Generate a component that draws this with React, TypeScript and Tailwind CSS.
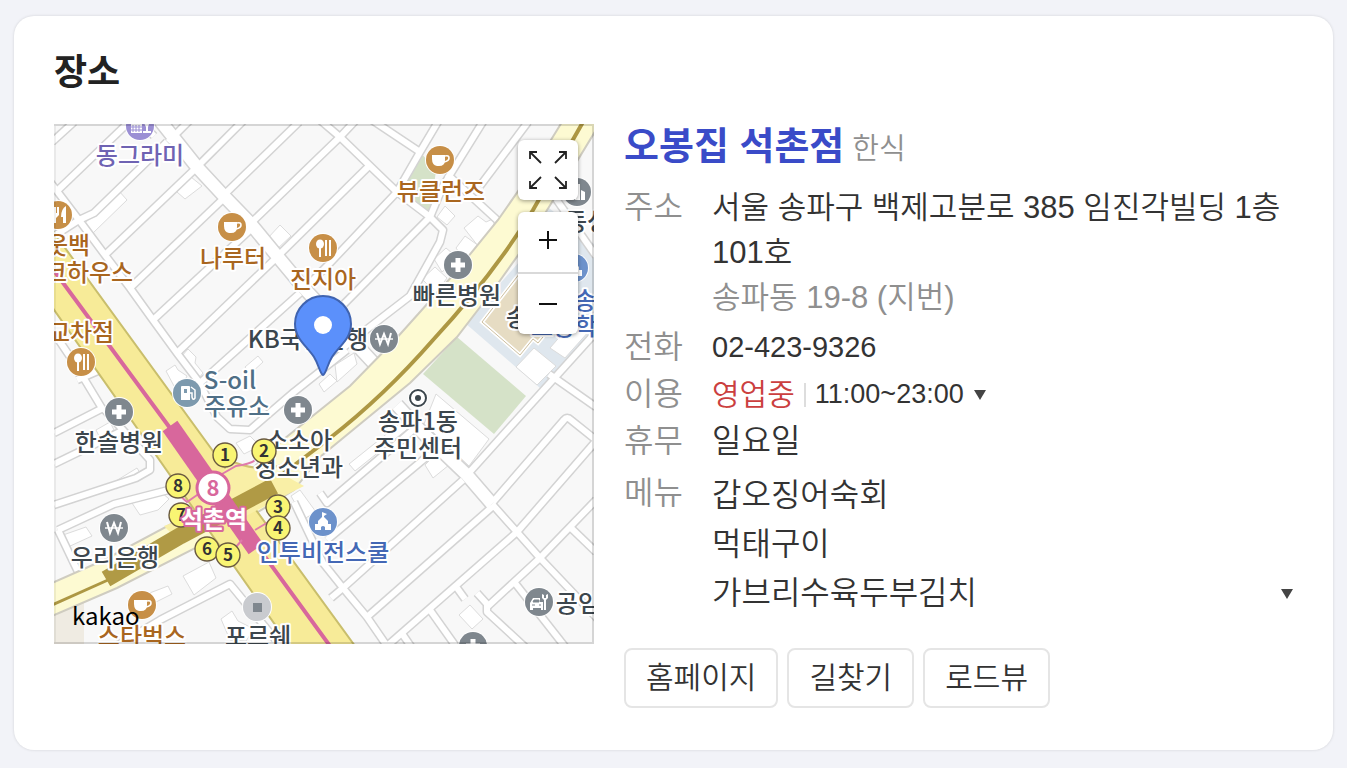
import React, { useState } from 'react';
import { clsx } from 'clsx';

type Kind =
  | 'cup'
  | 'spoon'
  | 'fork'
  | 'hospital'
  | 'won'
  | 'gas'
  | 'school'
  | 'office'
  | 'hotel'
  | 'shop'
  | 'car';

interface Poi {
  kind: Kind;
  x: number;
  y: number;
}

interface Label {
  text: string;
  x: number;
  y: number;
  tone: string;
}

const markerColors: Record<Kind, string> = {
  cup: '#c78f47',
  spoon: '#c78f47',
  fork: '#c78f47',
  hospital: '#7f878e',
  won: '#7f878e',
  gas: '#7d9aae',
  school: '#6d92cb',
  office: '#7f878e',
  hotel: '#9b8fd4',
  shop: '#c9cbcf',
  car: '#7f878e',
};

const BROWN = '#a9661f';
const DARK = '#3c464d';
const BLUE = '#4468b5';

const pois: Poi[] = [
  { kind: 'hotel', x: 86, y: 2 },
  { kind: 'cup', x: 386, y: 36 },
  { kind: 'cup', x: 178, y: 103 },
  { kind: 'fork', x: 4, y: 91 },
  { kind: 'spoon', x: 269, y: 124 },
  { kind: 'spoon', x: 27, y: 238 },
  { kind: 'hospital', x: 404, y: 141 },
  { kind: 'hospital', x: 65, y: 288 },
  { kind: 'hospital', x: 244, y: 286 },
  { kind: 'hospital', x: 419, y: 522 },
  { kind: 'won', x: 330, y: 215 },
  { kind: 'won', x: 60, y: 404 },
  { kind: 'gas', x: 133, y: 269 },
  { kind: 'school', x: 269, y: 398 },
  { kind: 'school', x: 520, y: 144 },
  { kind: 'office', x: 523, y: 68 },
  { kind: 'shop', x: 203, y: 483 },
  { kind: 'car', x: 485, y: 478 },
  { kind: 'cup', x: 88, y: 481 },
];

const labels: Label[] = [
  { text: '동그라미', x: 86, y: 40, tone: '#6f63b3' },
  { text: '뷰클런즈', x: 387, y: 76, tone: BROWN },
  { text: '나루터', x: 179, y: 143, tone: BROWN },
  { text: '진지아', x: 269, y: 164, tone: BROWN },
  { text: '아웃백', x: 3, y: 130, tone: BROWN },
  { text: '이크하우스', x: 24, y: 157, tone: BROWN },
  { text: '교차점', x: 27, y: 217, tone: BROWN },
  { text: '빠른병원', x: 403, y: 180, tone: DARK },
  { text: 'KB국민은행', x: 254, y: 224, tone: DARK },
  { text: 'S-oil', x: 176, y: 265, tone: '#4f6f86' },
  { text: '주유소', x: 183, y: 291, tone: '#4f6f86' },
  { text: '한솔병원', x: 65, y: 327, tone: DARK },
  { text: '소소아', x: 245, y: 325, tone: DARK },
  { text: '청소년과', x: 245, y: 352, tone: DARK },
  { text: '송파1동', x: 364, y: 306, tone: DARK },
  { text: '주민센터', x: 364, y: 333, tone: DARK },
  { text: '우리은행', x: 61, y: 442, tone: DARK },
  { text: '인투비전스쿨', x: 269, y: 437, tone: BLUE },
  { text: '스타벅스', x: 88, y: 521, tone: BROWN },
  { text: '포르쉐', x: 204, y: 521, tone: DARK },
  { text: '공임나라', x: 546, y: 488, tone: DARK },
  { text: '송파', x: 474, y: 202, tone: DARK },
  { text: '동성', x: 533, y: 106, tone: DARK },
  { text: '송파', x: 542, y: 185, tone: BLUE },
  { text: '초등학', x: 510, y: 211, tone: BLUE },
];

const exits = [
  { no: 1, x: 171, y: 331 },
  { no: 2, x: 210, y: 327 },
  { no: 7, x: 127, y: 391 },
  { no: 8, x: 124, y: 362 },
  { no: 3, x: 224, y: 383 },
  { no: 4, x: 224, y: 404 },
  { no: 6, x: 153, y: 425 },
  { no: 5, x: 174, y: 431 },
];

const streets = [
  'M-2 18L20-2',
  'M3 67L75-2',
  'M-4 58L3 67L25 96L51 131L76 164L99 196L123 229L145 258L163 293L176 305L196 306L240 268L293 226',
  'M0 112L25 96L40 89L113 18',
  'M85-4L100 12',
  'M51 131L140 46',
  'M76 164L168 76',
  'M99 196L196 106',
  'M123 229L220 136',
  'M146 259L246 169',
  'M146 40L190-4',
  'M114 18L136-4',
  'M173 68L245-2',
  'M198 98L286 13L302-4',
  'M226 130L316 41',
  'M250 165L276 139L343 68',
  'M266-4L286 13L314 40L343 68L376 93',
  'M312-8L366 28',
  'M343 68L366 28L385-4',
  'M376 93L389 62L430-4',
  'M376 93L389 106L386 118L356 172L286 226',
  'M290 180L376 93',
  'M393 50L443 96',
  'M426 62L474-2',
  'M0 209L23 243L49 286',
  'M23 256L46 246L60 262',
  'M0 309L49 284',
  'M49 284L96 336L96 346L82 354L0 381',
  'M70 306L0 340',
  'M4 406L60 380L130 362',
  'M4 406L26 452',
  'M62 522L106 496L176 460L230 526',
  'M266 369L273 379L366 300',
  'M240 378L269 439L289 464L313 493L333 522',
  'M273 416L376 330',
  'M277 474L289 464L409 356',
  'M313 493L438 383',
  'M333 522L463 408',
  'M439 378L510 296Q513 292 517 296L542 316',
  'M463 408L542 317',
  'M542 208L413 351',
  'M495 250L542 283',
  'M433 483L486 434L542 376',
  'M516 403L542 428',
  'M423 469L433 480L433 488L472 524',
  'M461 459L512 524',
  'M376 486L403 524',
  'M403 464L411 475',
  'M347 508L358 524',
  'M500 72L542 132',
];

const avenues = [
  'M104-6L143 43L169 71L196 99L224 133L249 163L326 246',
  'M343 281L366 306L413 351L438 380',
];

const buildings = [
  'M31 99L65 67L73 76L39 109Z',
  'M123 68L137 53L148 62L131 75Z',
  'M213 115L226 101L237 112L221 127Z',
  'M127 233L134 225L142 233L141 239L149 249L144 255Z',
  'M112 247L121 241L124 246L133 252L128 262L120 262Z',
  'M191 243L204 232L209 238L196 250Z',
  'M383 93L391 82L401 92L393 101Z',
  'M410 104L424 92L432 98L441 94L439 105L424 122Z',
  'M402 124L411 112L425 122L412 138Z',
  'M380 135L392 124L404 134L388 148Z',
  'M368 155L381 143L393 154L382 169Z',
  'M281 241L300 229L303 240L283 258Z',
  'M265 260L276 250L283 257L270 268Z',
  'M382 270L435 315L415 342L370 300Z',
  'M295 340L355 292L361 299L301 347Z',
  'M371 341L384 328L395 341L379 354Z',
  'M462 243L480 224L502 242L483 261Z',
  'M496 224L522 194L536 206L511 234Z',
  'M405 491L416 481L429 495L418 505Z',
  'M57 360L83 344L86 349L62 365Z',
  'M78 379L106 367L115 375L104 386L86 391Z',
  'M9 411L32 403L38 412L14 423Z',
  'M129 452L155 438L162 454L140 471Z',
  'M80 475L114 462L118 470L84 487Z',
  'M167 495L178 487L184 497L200 505L192 517L176 516Z',
  'M182 319L196 312L206 322L190 330Z',
  'M42 306L56 298L60 306L46 314Z',
  'M237 372L246 366L262 388L250 395Z',
];

function MarkerGlyph({ kind }: { kind: Kind }) {
  switch (kind) {
    case 'cup':
      return (
        <g>
          <path d="M-8-5H5V0Q5 6-1 6H-3Q-8 5-8-1Z" fill="#fff" />
          <path d="M5-4Q9-5 9-2T4 2" fill="none" stroke="#fff" strokeWidth="1.6" />
        </g>
      );
    case 'spoon':
      return (
        <g fill="#fff">
          <ellipse cx="-3" cy="-4" rx="4" ry="4.5" />
          <path d="M-4 0H-2V9H-4ZM2-8H4V8H2ZM6-8H8V8H6Z" />
        </g>
      );
    case 'fork':
      return (
        <g fill="#fff">
          <path d="M-7-8H-5V-2H-4V-8H-2V-2H-1V-8H1V0L-2 3V8H-4V3L-7 0Z" />
          <path d="M8-9V8H5V2H3Q3-6 8-9Z" />
        </g>
      );
    case 'hospital':
      return <path d="M-2.5-7H2.5V-2.5H7V2.5H2.5V7H-2.5V2.5H-7V-2.5H-2.5Z" fill="#fff" />;
    case 'won':
      return (
        <g fill="none" stroke="#fff" strokeWidth="2">
          <path d="M-7-6L-4 5L0-5L4 5L7-6" />
          <path d="M-9 0H9" strokeWidth="1.4" />
        </g>
      );
    case 'gas':
      return (
        <g>
          <path d="M-6-6Q-6-7-5-7H2Q3-7 3-6V7H-6Z" fill="#fff" />
          <path d="M-3-4H0V0H-3Z" fill="#7d9aae" />
          <path d="M4-6L8-3V5Q6 8 5 4V0H3" fill="none" stroke="#fff" strokeWidth="1.5" />
        </g>
      );
    case 'school':
      return (
        <path
          d="M-1-10L4-8L1-6V-5L5-1V2H8V8H2V5Q0 3-2 5V8H-8V2H-5V-1L-1-5Z"
          fill="#fff"
        />
      );
    case 'office':
      return <path d="M-8 8V-3H-3V8ZM-2 8V-8H3V8ZM4 8V-2L8 0V8Z" fill="#fff" />;
    case 'hotel':
      return (
        <g fill="#fff">
          <path d="M-9-4H2V7H-9Z" />
          <path d="M3-5H10L8 1V5H11V7H3V5H6V1Z" />
          <path d="M-7-1V6M-4-1V6M-1-1V6M-9 1H2M-9 4H2" stroke="#9b8fd4" strokeWidth="1" />
        </g>
      );
    case 'shop':
      return <path d="M-4-4H5V5H-4Z" fill="#7f878e" />;
    case 'car':
      return (
        <g>
          <path d="M-9 1L-6-4H1V0H4V8H2V6H-6V8H-9Z" fill="#fff" />
          <path d="M-6 0L-5-2H0V0ZM-7 3H-4M0 3H2" fill="#7f878e" stroke="#7f878e" />
          <path d="M3-8V-4L5-2V8H7V-2L9-4V-8L7-7V-4H5V-7Z" fill="#fff" />
        </g>
      );
  }
}

function MapDrawing() {
  return (
    <svg
      viewBox="0 0 540 520"
      className="block h-auto w-full bg-[#f8f8f8]"
      role="img"
      aria-label="오봉집 석촌점 주변 지도"
    >
      {/* Blocks */}
      <path d="M366 28L382 46L376 93L343 68Z" fill="#d5e2c8" />
      <path d="M403 213L472 272L440 310L369 250Z" fill="#d5e2c8" />
      <path d="M466 137L411 199L486 264L540 208V120L490 80Z" fill="#dfe7ee" />
      <path d="M0 482L30 468V520H0Z" fill="#efebe2" />
      <path
        d="M466 149L428 198L466 231L479 215L484 219L520 175L486 145Z"
        fill="#e6dcc3"
        stroke="#fff"
        strokeWidth="4"
      />
      <path
        d="M466 149L428 198L466 231L479 215L484 219L520 175L486 145Z"
        fill="none"
        stroke="#cdbf9f"
        strokeWidth="1"
      />
      <g fill="#fff" stroke="#dcdcdc" strokeWidth="1">
        {buildings.map((d) => (
          <path key={d} d={d} />
        ))}
      </g>

      {/* Streets: grey casing first, white surface on top */}
      <g fill="none" strokeLinejoin="round">
        <g stroke="#d3d3d3" strokeWidth="9">
          {streets.map((d) => (
            <path key={d} d={d} />
          ))}
        </g>
        <g stroke="#d3d3d3" strokeWidth="15">
          {avenues.map((d) => (
            <path key={d} d={d} />
          ))}
        </g>
        <path d="M438 380L463 408L486 434L523 473L562 514" stroke="#d3d3d3" strokeWidth="9" />
        <g stroke="#fff" strokeWidth="6">
          {streets.map((d) => (
            <path key={d} d={d} />
          ))}
          <path d="M438 380L463 408L486 434L523 473L562 514" />
        </g>
        <g stroke="#fff" strokeWidth="12">
          {avenues.map((d) => (
            <path key={d} d={d} />
          ))}
        </g>
      </g>

      {/* Main roads */}
      <path
        d="M508-2L476 50L444 96L400 150L340 217L296 262L230 315L180 362L140 388L50 436L-2 459V492L63 464L163 413L240 366L266 333L356 259L403 213L440 165L472 120L508 62L542 6V-2Z"
        fill="#fdfad2"
        stroke="#cfccc0"
        strokeWidth="2"
      />
      <path d="M-2 106L301 522H236L-2 183Z" fill="#f7eb98" stroke="#c9be6c" strokeWidth="2" />
      <path
        d="M176 338L200 344L228 350L250 362L236 369L192 392L150 405L120 412L110 402L140 390Z"
        fill="#f9efa6"
      />
      <path
        d="M529-2L479 86Q440 150 379 216Q330 272 276 314L226 352"
        fill="none"
        stroke="#ad9743"
        strokeWidth="4"
      />
      <path d="M-2 481L54 456" fill="none" stroke="#ad9743" strokeWidth="3" />
      <path d="M220 362L126 412L52 455" fill="none" stroke="#b09a45" strokeWidth="17" />
      <path d="M172 335Q205 350 230 340" fill="none" stroke="#d1c170" strokeWidth="2" />

      {/* Line 8 */}
      <path d="M-2 144L116 304L201 419L276 522" fill="none" stroke="#d8679c" strokeWidth="4" />
      <path d="M116 302L202 425" fill="none" stroke="#d8679c" strokeWidth="18" />
      <g fill="none" stroke="#e07bab" strokeWidth="2">
        <path d="M168 350L182 342Q200 340 206 332" />
        <path d="M124 370L133 378L146 369" />
        <path d="M201 406L216 397" />
        <path d="M176 430L188 416" />
      </g>

      <g>
        {pois.map((poi) => (
          <g key={`${poi.kind}-${poi.x}-${poi.y}`} transform={`translate(${poi.x} ${poi.y})`}>
            <circle r="15" fill="#fff" />
            <circle r="14" fill={markerColors[poi.kind]} />
            <MarkerGlyph kind={poi.kind} />
          </g>
        ))}
        <circle cx="364" cy="274" r="10" fill="#fff" />
        <circle cx="364" cy="274" r="8" fill="#fff" stroke={DARK} strokeWidth="2" />
        <circle cx="364" cy="274" r="3" fill={DARK} />
      </g>

      <g
        className="font-['Noto_Sans_CJK_KR',sans-serif] text-[24px] font-medium"
        textAnchor="middle"
        stroke="#fff"
        strokeWidth="4"
        strokeLinejoin="round"
        paintOrder="stroke"
      >
        {labels.map((label) => (
          <text key={`${label.text}-${label.x}`} x={label.x} y={label.y} fill={label.tone}>
            {label.text}
          </text>
        ))}
      </g>

      {/* Station exits */}
      <g className="font-['Noto_Sans_CJK_KR',sans-serif] text-[17px] font-bold" textAnchor="middle">
        {exits.map((exit) => (
          <g key={exit.no}>
            <circle cx={exit.x} cy={exit.y} r="12" fill="#f9f573" stroke="#6a5a40" strokeWidth="1.4" />
            <text x={exit.x} y={exit.y + 6} fill="#333">
              {exit.no}
            </text>
          </g>
        ))}
        <circle cx="159" cy="364" r="16" fill="#fff" stroke="#d8679c" strokeWidth="3" />
      </g>
      <g className="font-['Noto_Sans_CJK_KR',sans-serif] text-[22px]" textAnchor="middle">
        <text x="159" y="372" fill="#d8679c" className="font-bold">
          8
        </text>
        <text
          x="160"
          y="404"
          fill="#fff"
          stroke="#d8679c"
          strokeWidth="4"
          strokeLinejoin="round"
          paintOrder="stroke"
          className="text-[24px] font-bold"
        >
          석촌역
        </text>
      </g>

      {/* Place pin */}
      <path
        d="M269 251C266 250 265 241 260 233C253 222 241 215 241 200A28 28 0 0 1 297 200C297 215 285 222 278 233C273 241 272 250 269 251Z"
        fill="#5b90fb"
        stroke="#3f63b0"
        strokeWidth="2"
      />
      <circle cx="269" cy="201" r="9" fill="#fff" />

      <text x="18" y="501" fill="#000" className="font-['Noto_Sans_CJK_KR',sans-serif] text-[24px]">
        kakao
      </text>
      <path d="M0 1H539V519H0" fill="none" stroke="#000" strokeOpacity="0.14" strokeWidth="2" />
      <path d="M1 2V518" stroke="#000" strokeOpacity="0.12" strokeWidth="1" />
    </svg>
  );
}

function PlaceMap() {
  return (
    <div className="relative w-[540px] shrink-0 overflow-hidden">
      <MapDrawing />
      <div className="absolute top-4 right-4 flex flex-col gap-3">
        <button
          type="button"
          aria-label="지도 확대 보기"
          className="flex size-[60px] items-center justify-center rounded-md bg-white shadow-[0_1px_4px_rgba(0,0,0,0.4)]"
        >
          <svg viewBox="0 0 40 40" className="size-10" fill="none" stroke="#222" strokeWidth="1.8">
            <path d="M13 13L2 2M2 9V2H9" />
            <path d="M27 13L38 2M31 2H38V9" />
            <path d="M13 27L2 38M2 31V38H9" />
            <path d="M27 27L38 38M38 31V38H31" />
          </svg>
        </button>
        <div className="flex flex-col rounded-md bg-white shadow-[0_1px_4px_rgba(0,0,0,0.4)]">
          <button
            type="button"
            aria-label="확대"
            className="flex h-[62px] w-[60px] items-center justify-center border-b-2 border-[#d9d9d9] pb-1"
          >
            <svg viewBox="0 0 20 20" className="size-5" stroke="#111" strokeWidth="2">
              <path d="M1 10H19M10 1V19" />
            </svg>
          </button>
          <button
            type="button"
            aria-label="축소"
            className="flex h-[60px] w-[60px] items-center justify-center"
          >
            <svg viewBox="0 0 20 20" className="size-5" stroke="#111" strokeWidth="2">
              <path d="M1 10H19" />
            </svg>
          </button>
        </div>
      </div>
    </div>
  );
}

function Arrow() {
  return (
    <svg viewBox="0 0 12 10" className="h-[10px] w-3" fill="#444" aria-hidden="true">
      <path d="M0 0H12L6 10Z" />
    </svg>
  );
}

interface RowProps {
  label: string;
  className: string;
  valueClassName: string;
  children: React.ReactNode;
}

function Row({ label, className, valueClassName, children }: RowProps) {
  return (
    <div className={clsx('flex', className)}>
      <dt className="w-[88px] shrink-0 text-[32px] text-[#8f8f8f]">{label}</dt>
      <dd className={clsx('min-w-0 flex-1 text-[#333]', valueClassName)}>{children}</dd>
    </div>
  );
}

const menus = ['갑오징어숙회', '먹태구이', '가브리수육두부김치'];
const actions = ['홈페이지', '길찾기', '로드뷰'];

export default function App() {
  const [hoursOpen, setHoursOpen] = useState(false);
  const [menuOpen, setMenuOpen] = useState(false);

  return (
    <main className="min-h-screen bg-[#f2f3f8] px-[14px] pt-4 pb-[18px] font-['Liberation_Sans','Noto_Sans_CJK_KR',sans-serif]">
      <section className="rounded-[20px] bg-white px-10 pt-7 pb-[42px] shadow-[0_0_3px_rgba(0,0,0,0.14)]">
        <h2 className="text-4xl leading-[58px] font-bold text-[#222]">장소</h2>

        <div className="mt-[22px] flex items-start gap-[30px]">
          <PlaceMap />

          <div className="min-w-0 flex-1">
            <div className="flex h-11 items-baseline gap-2 leading-[44px]">
              <a href="#place" className="text-[38px] font-bold text-[#3a4bc8]">
                오봉집 석촌점
              </a>
              <span className="text-[29px] font-[350] text-[#8f8f8f]">한식</span>
            </div>

            <dl className="mt-[17px] font-[350]">
              <Row label="주소" className="mb-1 leading-[45px]" valueClassName="text-[31px]">
                <p>서울 송파구 백제고분로 385 임진각빌딩 1층 101호</p>
                <p className="text-[#8f8f8f]">송파동 19-8 (지번)</p>
              </Row>
              <Row label="전화" className="leading-[47px]" valueClassName="text-[29px]">
                <a href="tel:02-423-9326">02-423-9326</a>
              </Row>
              <Row label="이용" className="h-[47px] leading-[47px]" valueClassName="text-[27px]">
                <button
                  type="button"
                  aria-expanded={hoursOpen}
                  onClick={() => setHoursOpen(!hoursOpen)}
                  className="flex h-[47px] items-center"
                >
                  <span className="text-[30px] text-[#cb3f3f]">영업중</span>
                  <span className="mx-[9px] h-6 w-[2px] bg-[#ddd]" />
                  <span>11:00~23:00</span>
                  <span className="ml-[10px]">
                    <Arrow />
                  </span>
                </button>
              </Row>
              <Row label="휴무" className="leading-[47px]" valueClassName="text-[32px]">
                일요일
              </Row>
              <Row label="메뉴" className="pt-1 leading-[49px]" valueClassName="pt-[2px] text-[32px]">
                <div className="flex items-end justify-between">
                  <ul>
                    {menus.map((menu) => (
                      <li key={menu}>{menu}</li>
                    ))}
                  </ul>
                  <button
                    type="button"
                    aria-label="메뉴 더보기"
                    aria-expanded={menuOpen}
                    onClick={() => setMenuOpen(!menuOpen)}
                    className="flex h-[49px] items-center"
                  >
                    <Arrow />
                  </button>
                </div>
              </Row>
            </dl>

            <div className="mt-[30px] flex gap-[9px]">
              {actions.map((action) => (
                <button
                  key={action}
                  type="button"
                  className="h-[60px] rounded-lg border-2 border-[#e5e5e5] px-5 text-[30px] leading-[50px] font-[350] text-[#333]"
                >
                  {action}
                </button>
              ))}
            </div>
          </div>
        </div>
      </section>
    </main>
  );
}
